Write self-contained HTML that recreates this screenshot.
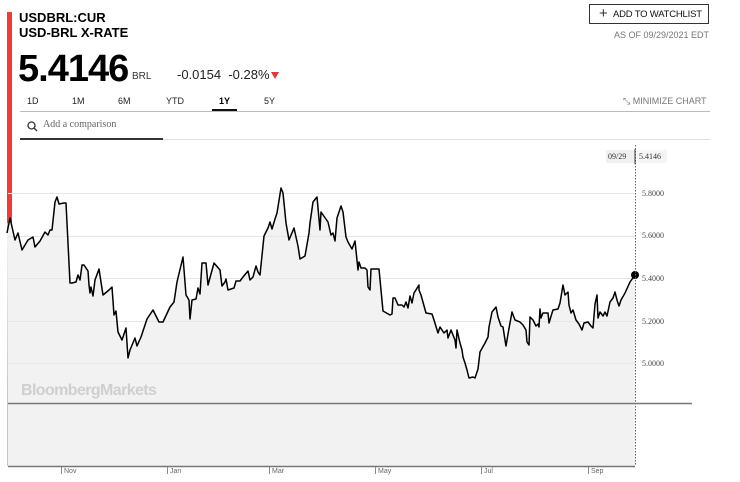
<!DOCTYPE html>
<html><head><meta charset="utf-8"><style>
body{margin:0;width:740px;height:482px;background:#fff;font-family:"Liberation Sans",Arial,sans-serif;position:relative;overflow:hidden;color:#000}
.a{position:absolute;white-space:nowrap}
</style></head><body>
<div class="a" style="left:7px;top:12px;width:5px;height:211px;background:#f33b35"></div>
<div class="a" style="left:7px;top:223px;width:1px;height:243px;background:#f4b0ad"></div>
<div class="a" style="left:19px;top:10px;font-size:13px;font-weight:bold;line-height:15px">USDBRL:CUR<br>USD-BRL X-RATE</div>
<div class="a" style="left:18px;top:47px;font-size:38px;font-weight:bold;letter-spacing:-1px;line-height:44px">5.4146</div>
<div class="a" style="left:132px;top:71px;font-size:10px;color:#333">BRL</div>
<div class="a" style="left:177px;top:67px;font-size:13px;color:#222">-0.0154 &nbsp;-0.28%</div>
<div class="a" style="left:271px;top:72px;width:0;height:0;border-left:4px solid transparent;border-right:4px solid transparent;border-top:7px solid #e33"></div>
<div class="a" style="left:589px;top:4px;width:120px;height:20px;border:1px solid #333;box-sizing:border-box"></div>
<div class="a" style="left:599px;top:9px;font-size:15px;line-height:10px;color:#333">+</div>
<div class="a" style="left:613px;top:9px;font-size:9.5px;color:#111;letter-spacing:-0.2px">ADD TO WATCHLIST</div>
<div class="a" style="left:614px;top:30px;font-size:9px;color:#777">AS OF 09/29/2021 EDT</div>
<div class="a" style="left:27px;top:96px;font-size:9px;color:#222">1D</div>
<div class="a" style="left:72px;top:96px;font-size:9px;color:#222">1M</div>
<div class="a" style="left:118px;top:96px;font-size:9px;color:#222">6M</div>
<div class="a" style="left:166px;top:96px;font-size:9px;color:#222">YTD</div>
<div class="a" style="left:219px;top:96px;font-size:9px;font-weight:bold">1Y</div>
<div class="a" style="left:264px;top:96px;font-size:9px;color:#222">5Y</div>
<div class="a" style="left:212px;top:109px;width:25px;height:2px;background:#111"></div>
<div class="a" style="left:20px;top:111px;width:690px;height:1px;background:#bbb"></div>
<div class="a" style="left:623px;top:96px;font-size:9px;color:#777">⤡ MINIMIZE CHART</div>
<svg class="a" style="left:27px;top:121px" width="11" height="11"><circle cx="4.5" cy="4.5" r="3.5" fill="none" stroke="#333" stroke-width="1.3"/><line x1="7" y1="7" x2="10" y2="10" stroke="#333" stroke-width="1.3"/></svg>
<div class="a" style="left:43px;top:119px;font-size:10px;color:#666;font-family:'Liberation Serif',serif">Add a comparison</div>
<div class="a" style="left:20px;top:139px;width:690px;height:1px;background:#ddd"></div>
<div class="a" style="left:20px;top:138px;width:143px;height:2px;background:#333"></div>
<svg class="a" style="left:0;top:0" width="740" height="482">
<rect x="8" y="404" width="627" height="62" fill="#f2f2f2"/>
<polygon fill="#f2f2f2" points="8,404 7,233 10,218 15,240 18,233 22,250 28,240 33,237 35,247 40,241 45,232 48,235 50,230 52,230 55,202 57,197 59,204 64,203 66,203 70,283 72,283 76,282 78,275 80,280 82,265 84,265 88,271 89,285 90,293 91,287 93,296 95,280 99,269 103,295 109,290 112,287 114,315 116,311 118,332 122,340 126,328 128,358 130,350 135,338 137,346 141,337 147,319 153,310 159,322 163,322 170,307 174,302 177,282 183,257 186,295 189,300 190,319 192,300 196,299 198,288 200,294 202,263 206,263 208,285 214,263 220,270 222,286 225,282 226,279 228,290 234,288 236,281 240,281 243,277 248,271 250,280 253,277 256,266 258,272 260,275 264,236 268,228 270,222 272,229 275,219 277,213 281,188 283,193 286,223 289,240 294,228 298,246 300,259 305,256 309,233 310,223 313,202 317,197 320,230 321,212 328,222 331,235 333,233 335,241 337,218 341,206 343,212 346,237 348,242 352,249 355,241 358,270 359,262 361,268 365,268 367,270 368,287 370,290 371,269 379,269 383,311 390,315 392,314 393,298 395,298 398,305 402,305 404,307 406,302 408,308 410,296 412,303 414,293 419,285 419,290 421,295 426,313 432,314 434,320 438,333 440,327 444,333 447,330 448,338 451,330 455,340 456,348 457,330 460,343 462,350 463,357 465,363 467,370 469,378 473,377 475,378 478,369 480,352 485,343 488,337 489,327 492,312 496,307 498,317 501,326 503,327 505,340 506,346 508,334 512,312 515,320 520,322 523,325 526,330 527,342 529,345 530,317 533,320 536,326 538,324 539,327 540,309 541,318 543,313 548,313 549,323 552,313 553,310 558,309 560,303 563,285 565,295 568,292 569,305 571,313 573,310 576,320 579,324 582,330 584,323 588,322 591,326 593,328 595,304 597,295 598,318 600,312 603,316 605,312 607,316 610,302 613,298 615,292 617,300 619,306 621,300 625,293 630,282 635,275 635,404"/>
<g stroke="#e6e6e6" stroke-width="1"><line x1="8" y1="193.5" x2="635" y2="193.5"/><line x1="8" y1="236.5" x2="635" y2="236.5"/><line x1="8" y1="278.5" x2="635" y2="278.5"/><line x1="8" y1="321.5" x2="635" y2="321.5"/><line x1="8" y1="363.5" x2="635" y2="363.5"/></g>
<polyline fill="none" stroke="#000" stroke-width="1.5" stroke-linejoin="round" points="7,233 10,218 15,240 18,233 22,250 28,240 33,237 35,247 40,241 45,232 48,235 50,230 52,230 55,202 57,197 59,204 64,203 66,203 70,283 72,283 76,282 78,275 80,280 82,265 84,265 88,271 89,285 90,293 91,287 93,296 95,280 99,269 103,295 109,290 112,287 114,315 116,311 118,332 122,340 126,328 128,358 130,350 135,338 137,346 141,337 147,319 153,310 159,322 163,322 170,307 174,302 177,282 183,257 186,295 189,300 190,319 192,300 196,299 198,288 200,294 202,263 206,263 208,285 214,263 220,270 222,286 225,282 226,279 228,290 234,288 236,281 240,281 243,277 248,271 250,280 253,277 256,266 258,272 260,275 264,236 268,228 270,222 272,229 275,219 277,213 281,188 283,193 286,223 289,240 294,228 298,246 300,259 305,256 309,233 310,223 313,202 317,197 320,230 321,212 328,222 331,235 333,233 335,241 337,218 341,206 343,212 346,237 348,242 352,249 355,241 358,270 359,262 361,268 365,268 367,270 368,287 370,290 371,269 379,269 383,311 390,315 392,314 393,298 395,298 398,305 402,305 404,307 406,302 408,308 410,296 412,303 414,293 419,285 419,290 421,295 426,313 432,314 434,320 438,333 440,327 444,333 447,330 448,338 451,330 455,340 456,348 457,330 460,343 462,350 463,357 465,363 467,370 469,378 473,377 475,378 478,369 480,352 485,343 488,337 489,327 492,312 496,307 498,317 501,326 503,327 505,340 506,346 508,334 512,312 515,320 520,322 523,325 526,330 527,342 529,345 530,317 533,320 536,326 538,324 539,327 540,309 541,318 543,313 548,313 549,323 552,313 553,310 558,309 560,303 563,285 565,295 568,292 569,305 571,313 573,310 576,320 579,324 582,330 584,323 588,322 591,326 593,328 595,304 597,295 598,318 600,312 603,316 605,312 607,316 610,302 613,298 615,292 617,300 619,306 621,300 625,293 630,282 635,275"/>
<circle cx="635" cy="275" r="4" fill="#000"/>
<line x1="635.5" y1="145" x2="635.5" y2="466" stroke="#666" stroke-width="1" stroke-dasharray="1.5,1.5"/>
<line x1="8" y1="403.5" x2="692" y2="403.5" stroke="#777" stroke-width="1.5"/>
<line x1="8" y1="466.5" x2="635" y2="466.5" stroke="#777" stroke-width="1.5"/>
<rect x="606" y="150" width="28" height="13" fill="#f0f0f0"/><rect x="637" y="150" width="30" height="13" fill="#f5f5f5"/>
<line x1="635" y1="149" x2="635" y2="164" stroke="#333" stroke-width="1"/>
<g stroke="#888" stroke-width="1"><line x1="61.5" y1="467" x2="61.5" y2="474"/><line x1="167.5" y1="467" x2="167.5" y2="474"/><line x1="269.5" y1="467" x2="269.5" y2="474"/><line x1="375.5" y1="467" x2="375.5" y2="474"/><line x1="481.5" y1="467" x2="481.5" y2="474"/><line x1="588.5" y1="467" x2="588.5" y2="474"/></g>
</svg>
<div class="a" style="left:608px;top:152px;font-size:8px;color:#333;font-family:'Liberation Serif',serif">09/29</div>
<div class="a" style="left:639px;top:152px;font-size:8px;color:#333;font-family:'Liberation Serif',serif">5.4146</div>
<div class="a" style="left:642px;top:189px;font-size:8px;color:#444;font-family:'Liberation Serif',serif">5.8000</div>
<div class="a" style="left:642px;top:231px;font-size:8px;color:#444;font-family:'Liberation Serif',serif">5.6000</div>
<div class="a" style="left:642px;top:274px;font-size:8px;color:#444;font-family:'Liberation Serif',serif">5.4000</div>
<div class="a" style="left:642px;top:317px;font-size:8px;color:#444;font-family:'Liberation Serif',serif">5.2000</div>
<div class="a" style="left:642px;top:359px;font-size:8px;color:#444;font-family:'Liberation Serif',serif">5.0000</div>
<div class="a" style="left:21px;top:382px;font-size:16px;font-weight:bold;color:#cfcfcf;letter-spacing:-0.6px">BloombergMarkets</div>
<div class="a" style="left:64px;top:468px;font-size:7px;color:#666">Nov</div>
<div class="a" style="left:170px;top:468px;font-size:7px;color:#666">Jan</div>
<div class="a" style="left:272px;top:468px;font-size:7px;color:#666">Mar</div>
<div class="a" style="left:378px;top:468px;font-size:7px;color:#666">May</div>
<div class="a" style="left:484px;top:468px;font-size:7px;color:#666">Jul</div>
<div class="a" style="left:591px;top:468px;font-size:7px;color:#666">Sep</div>
</body></html>
